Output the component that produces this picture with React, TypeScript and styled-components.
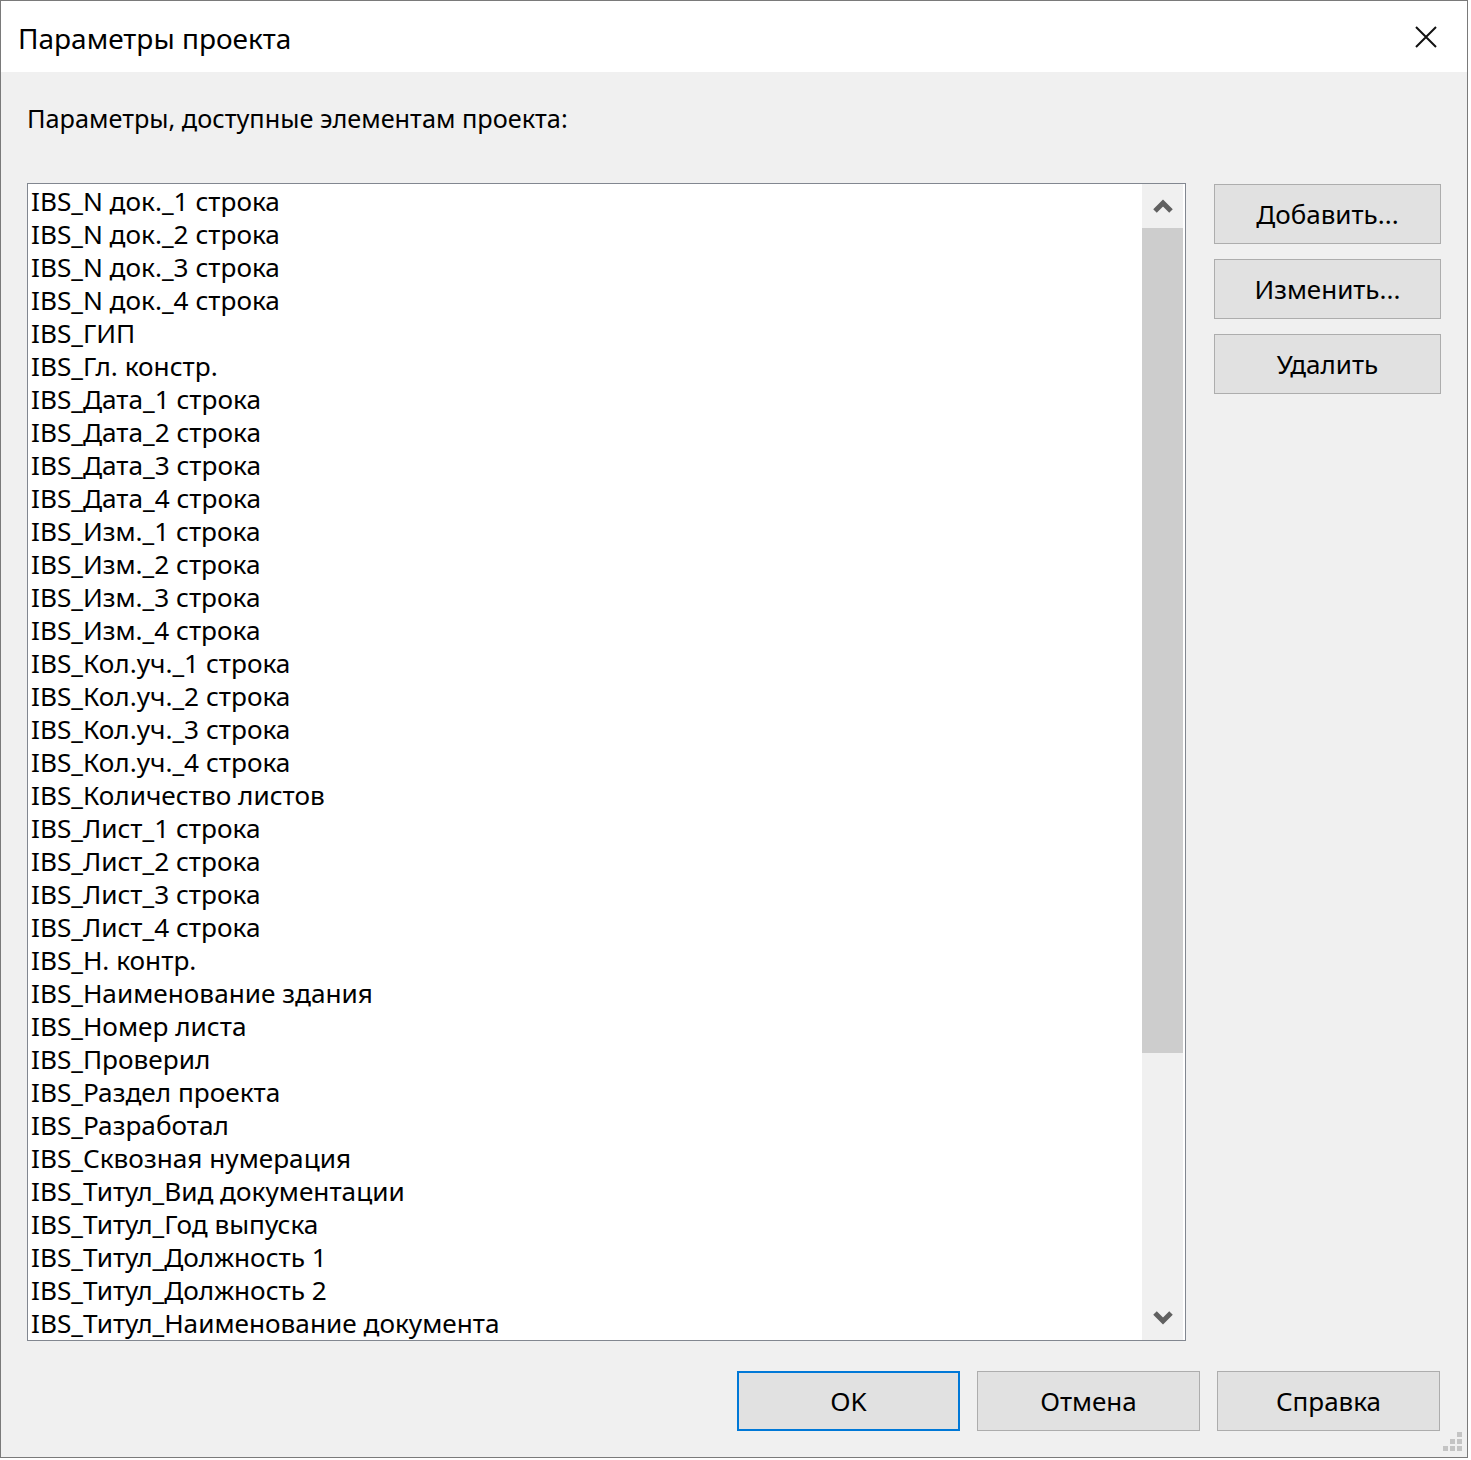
import React from "react";
import styled, { createGlobalStyle } from "styled-components";

const GlobalStyle = createGlobalStyle`
  html, body {
    margin: 0;
    padding: 0;
    background: #ffffff;
  }
  body {
    font-family: "Noto Sans", "Open Sans", sans-serif;
  }
`;

const UI_FONT = `"Noto Sans", "Open Sans", sans-serif`;

const Window = styled.div`
  width: 1468px;
  height: 1458px;
  box-sizing: border-box;
  border: 1px solid #7a7a7a;
  background: #f0f0f0;
  display: flex;
  flex-direction: column;
  font-family: ${UI_FONT};
  color: #000;
  position: relative;
`;

const TitleBar = styled.div`
  height: 71px;
  background: #ffffff;
  display: flex;
  align-items: center;
  justify-content: space-between;
  padding-left: 17px;
`;

const Title = styled.div`
  font-size: 28px;
  line-height: 36px;
  margin-top: 2px;
`;

const CloseButton = styled.div`
  width: 82px;
  height: 71px;
  display: flex;
  align-items: center;
  justify-content: center;
`;

const Body = styled.div`
  flex: 1;
  display: flex;
  flex-direction: column;
  padding: 30px 26px 0 26px;
`;

const Caption = styled.div`
  font-size: 25.3px;
  line-height: 33px;
  height: 33px;
  margin-bottom: 48px;
`;

const Main = styled.div`
  display: flex;
  align-items: flex-start;
  gap: 28px;
`;

const ListBox = styled.div`
  width: 1159px;
  height: 1158px;
  box-sizing: border-box;
  border: 1px solid #828790;
  background: #ffffff;
  display: flex;
  overflow: hidden;
`;

const Rows = styled.div`
  flex: 1;
  padding-top: 1px;
  overflow: hidden;
`;

const Row = styled.div`
  height: 33px;
  line-height: 33px;
  font-size: 26.2px;
  padding-left: 3px;
  white-space: nowrap;
`;

const ScrollBar = styled.div`
  width: 41px;
  margin-right: 2px;
  background: #f0f0f0;
  display: flex;
  flex-direction: column;
`;

const ScrollArrow = styled.div`
  height: 44px;
  display: flex;
  align-items: center;
  justify-content: center;
`;

const ScrollTrack = styled.div`
  flex: 1;
  display: flex;
  flex-direction: column;
`;

const Thumb = styled.div`
  height: 825px;
  background: #cdcdcd;
`;

const SideButtons = styled.div`
  display: flex;
  flex-direction: column;
  gap: 15px;
  padding-top: 1px;
`;

const Button = styled.div<{ $wide?: boolean; $focused?: boolean }>`
  width: ${(p) => (p.$wide ? 227 : 223)}px;
  height: 60px;
  box-sizing: border-box;
  background: #e1e1e1;
  border: ${(p) => (p.$focused ? "2px solid #0078d7" : "1px solid #adadad")};
  display: flex;
  align-items: center;
  justify-content: center;
  font-size: 26px;
`;

const Footer = styled.div`
  display: flex;
  justify-content: flex-end;
  gap: 17px;
  padding: 30px 1px 0 0;
`;

const Grip = styled.div`
  position: absolute;
  right: 4px;
  bottom: 5px;
  width: 20px;
  height: 20px;
`;

const items = [
  "IBS_N док._1 строка",
  "IBS_N док._2 строка",
  "IBS_N док._3 строка",
  "IBS_N док._4 строка",
  "IBS_ГИП",
  "IBS_Гл. констр.",
  "IBS_Дата_1 строка",
  "IBS_Дата_2 строка",
  "IBS_Дата_3 строка",
  "IBS_Дата_4 строка",
  "IBS_Изм._1 строка",
  "IBS_Изм._2 строка",
  "IBS_Изм._3 строка",
  "IBS_Изм._4 строка",
  "IBS_Кол.уч._1 строка",
  "IBS_Кол.уч._2 строка",
  "IBS_Кол.уч._3 строка",
  "IBS_Кол.уч._4 строка",
  "IBS_Количество листов",
  "IBS_Лист_1 строка",
  "IBS_Лист_2 строка",
  "IBS_Лист_3 строка",
  "IBS_Лист_4 строка",
  "IBS_Н. контр.",
  "IBS_Наименование здания",
  "IBS_Номер листа",
  "IBS_Проверил",
  "IBS_Раздел проекта",
  "IBS_Разработал",
  "IBS_Сквозная нумерация",
  "IBS_Титул_Вид документации",
  "IBS_Титул_Год выпуска",
  "IBS_Титул_Должность 1",
  "IBS_Титул_Должность 2",
  "IBS_Титул_Наименование документа",
];

// scrollbar arrow, solid chevron like the classic list box
const Chevron = ({ up }: { up?: boolean }) => (
  <svg width="20" height="16" viewBox="0 0 20 16">
    <path
      d={up ? "M2 13 L10 5 L18 13" : "M2 3 L10 11 L18 3"}
      fill="none"
      stroke="#606060"
      strokeWidth="5"
      strokeLinejoin="miter"
    />
  </svg>
);

const App = () => {
  return (
    <>
      <GlobalStyle />
      <Window>
        <TitleBar>
          <Title>Параметры проекта</Title>
          <CloseButton>
            <svg width="22" height="22" viewBox="0 0 22 22">
              <path d="M1 1 L21 21 M21 1 L1 21" stroke="#111" strokeWidth="2" />
            </svg>
          </CloseButton>
        </TitleBar>
        <Body>
          <Caption>Параметры, доступные элементам проекта:</Caption>
          <Main>
            <ListBox>
              <Rows>
                {items.map((name) => (
                  <Row key={name}>{name}</Row>
                ))}
              </Rows>
              <ScrollBar>
                <ScrollArrow>
                  <Chevron up />
                </ScrollArrow>
                <ScrollTrack>
                  <Thumb />
                </ScrollTrack>
                <ScrollArrow>
                  <Chevron />
                </ScrollArrow>
              </ScrollBar>
            </ListBox>
            <SideButtons>
              <Button $wide>Добавить...</Button>
              <Button $wide>Изменить...</Button>
              <Button $wide>Удалить</Button>
            </SideButtons>
          </Main>
          <Footer>
            <Button $focused>OK</Button>
            <Button>Отмена</Button>
            <Button>Справка</Button>
          </Footer>
        </Body>
        <Grip>
          <svg width="20" height="20" viewBox="0 0 20 20">
            {[
              [14, 0],
              [14, 7],
              [7, 7],
              [14, 14],
              [7, 14],
              [0, 14],
            ].map(([x, y]) => (
              <rect key={`${x}-${y}`} x={x} y={y} width="5" height="5" fill="#c4c4c4" />
            ))}
          </svg>
        </Grip>
      </Window>
    </>
  );
};

export default App;
